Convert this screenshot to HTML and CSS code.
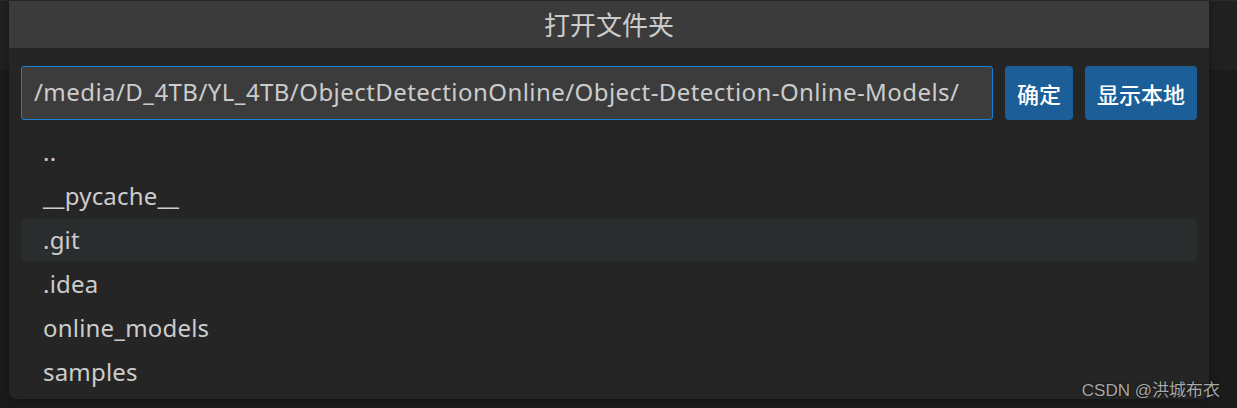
FILE: index.html
```html
<!DOCTYPE html>
<html lang="zh">
<head>
<meta charset="utf-8">
<title>打开文件夹</title>
<link rel="stylesheet" href="styles.css">
</head>
<body>
<div class="workbench">
  <div class="topband"></div>
  <div class="rest"></div>
</div>
<div class="dialog">
  <div class="title">打开文件夹</div>
  <div class="body">
    <div class="inputrow">
      <div class="pathinput">/media/D_4TB/YL_4TB/ObjectDetectionOnline/Object-Detection-Online-Models/</div>
      <button class="btn btn-ok">确定</button>
      <button class="btn btn-local">显示本地</button>
    </div>
    <ul class="list">
      <li class="item">..</li>
      <li class="item">__pycache__</li>
      <li class="item hover">.git</li>
      <li class="item">.idea</li>
      <li class="item">online_models</li>
      <li class="item">samples</li>
    </ul>
  </div>
</div>
<div class="watermark">CSDN @洪城布衣</div>
</body>
</html>
```
FILE: styles.css
```css
html, body {
  margin: 0;
  padding: 0;
  width: 1237px;
  height: 408px;
  overflow: hidden;
  background: #1b1b1b;
  font-family: "Noto Sans", "Noto Sans CJK SC", sans-serif;
}
.workbench {
  display: flex;
  flex-direction: column;
  height: 408px;
}
.topband {
  height: 70px;
  background: #212121;
  border-top: 1px solid #2b2b2b;
  box-sizing: border-box;
}
.rest {
  flex: 1;
  background: #1b1b1b;
}
.dialog {
  position: absolute;
  left: 9px;
  top: 1px;
  width: 1200px;
  height: 398px;
  background: #252525;
  border-radius: 0 0 7px 7px;
  overflow: hidden;
  box-shadow: 0 0 8px rgba(0,0,0,0.35);
}
.title {
  height: 47px;
  background: #3b3b3b;
  color: #cccccc;
  font-family: "Noto Sans CJK SC", sans-serif;
  font-size: 26px;
  line-height: 46px;
  text-align: center;
}
.body {
  padding: 18px 12px 0 12px;
}
.inputrow {
  display: flex;
  align-items: stretch;
  height: 54px;
  gap: 12px;
}
.pathinput {
  flex: 1;
  box-sizing: border-box;
  border: 1px solid #1a7fd4;
  border-radius: 3px;
  background: #3c3c3c;
  color: #cccccc;
  font-size: 24px;
  letter-spacing: 0.44px;
  line-height: 50px;
  padding-left: 12px;
  white-space: nowrap;
  overflow: hidden;
}
.btn {
  border: none;
  border-radius: 4px;
  background: #1c5f98;
  color: #ffffff;
  font-family: "Noto Sans CJK SC", sans-serif;
  font-size: 22px;
  font-weight: 500;
  padding: 0;
  margin: 0;
}
.btn-ok { width: 68px; }
.btn-local { width: 112px; }
.list {
  list-style: none;
  margin: 10px 0 0 0;
  padding: 0;
}
.item {
  height: 44px;
  line-height: 44px;
  padding-left: 22px;
  color: #cccccc;
  font-size: 24px;
  letter-spacing: 0.2px;
  border-radius: 5px;
}
.item.hover {
  background: #2a2d2e;
}
.watermark {
  position: absolute;
  right: 17px;
  top: 376px;
  color: #a8a8a8;
  font-family: "Liberation Sans", "Noto Sans CJK SC", sans-serif;
  font-size: 17px;
  text-shadow: 0 0 2px #000;
}
```
